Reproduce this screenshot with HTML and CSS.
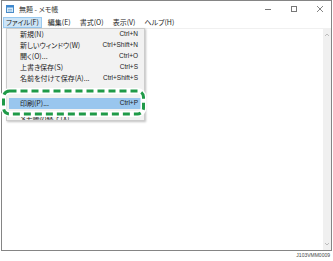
FILE: index.html
```html
<!DOCTYPE html>
<html lang="ja">
<head>
<meta charset="utf-8">
<link rel="stylesheet" href="styles.css">
</head>
<body>
<div class="screen">
  <div class="window">
    <div class="titlebar">
      <svg class="app-icon" width="8" height="8" viewBox="0 0 8 8">
        <rect x="0.5" y="0.5" width="7" height="7" fill="#d8ecfa" stroke="#4a8cc9"/>
        <rect x="0.5" y="0.5" width="7" height="2" fill="#3b86d0"/>
        <path d="M2 4.5h4M2 6h4" stroke="#7aa6cf" stroke-width="0.7"/>
      </svg>
      <span class="title">無題 - メモ帳</span>
      <div class="controls">
        <svg class="ctl" width="10" height="10" viewBox="0 0 10 10"><path d="M2 5.5h6" stroke="#777" stroke-width="1"/></svg>
        <svg class="ctl" width="10" height="10" viewBox="0 0 10 10"><rect x="2.5" y="2.5" width="5" height="5" fill="none" stroke="#777" stroke-width="1"/></svg>
        <svg class="ctl" width="10" height="10" viewBox="0 0 10 10"><path d="M2 2l6 6M8 2l-6 6" stroke="#777" stroke-width="0.9"/></svg>
      </div>
    </div>
    <div class="menubar">
      <span class="menu active">ファイル(F)</span>
      <span class="menu">編集(E)</span>
      <span class="menu">書式(O)</span>
      <span class="menu">表示(V)</span>
      <span class="menu">ヘルプ(H)</span>
    </div>
    <div class="editor">
      <div class="text"></div>
      <div class="scrollbar">
        <svg width="8" height="8" viewBox="0 0 8 8"><path d="M2 5l2-2 2 2" fill="none" stroke="#b0b0b0" stroke-width="0.8"/></svg>
        <svg width="8" height="8" viewBox="0 0 8 8"><path d="M2 3l2 2 2-2" fill="none" stroke="#b0b0b0" stroke-width="0.8"/></svg>
      </div>
    </div>
  </div>

  <div class="dropdown">
    <div class="item"><span>新規(N)</span><span class="key">Ctrl+N</span></div>
    <div class="item"><span>新しいウィンドウ(W)</span><span class="key">Ctrl+Shift+N</span></div>
    <div class="item"><span>開く(O)...</span><span class="key">Ctrl+O</span></div>
    <div class="item"><span>上書き保存(S)</span><span class="key">Ctrl+S</span></div>
    <div class="item"><span>名前を付けて保存(A)...</span><span class="key">Ctrl+Shift+S</span></div>
    <div class="sep"></div>
    <div class="item selected"><span>印刷(P)...</span><span class="key">Ctrl+P</span></div>
    <div class="item last"><span>メモ帳の終了(X)</span><span class="key"></span></div>
  </div>

  <svg class="focus" width="147" height="31" viewBox="0 0 147 31">
    <rect x="3.5" y="4" width="140" height="23" rx="6" fill="none" stroke="#ffffff" stroke-width="6"/>
    <rect x="3.5" y="4" width="140" height="23" rx="6" fill="none" stroke="#1f9a48" stroke-width="3" stroke-dasharray="7 4"/>
  </svg>

  <div class="caption">J103VMM0009</div>
</div>
</body>
</html>
```

FILE: styles.css
```css
* { box-sizing: border-box; }
html, body { margin: 0; padding: 0; background: #fff; }
body {
  font-family: "Noto Sans CJK JP", "Noto Sans", sans-serif;
  color: #222;
  font-feature-settings: "palt";
}
.screen {
  position: relative;
  width: 333px;
  height: 261px;
  overflow: hidden;
}
.window {
  margin-left: 1px;
  width: 331px;
  height: 251px;
  border: 1px solid #858585;
  display: flex;
  flex-direction: column;
  background: #fff;
}
.titlebar {
  height: 16px;
  display: flex;
  align-items: center;
  padding-left: 4px;
}
.app-icon { flex: none; }
.title {
  margin-left: 5px;
  font-size: 7px;
  color: #333;
  line-height: 1;
}
.controls {
  margin-left: auto;
  display: flex;
  gap: 16px;
  padding-right: 6px;
}
.ctl { display: block; }
.menubar {
  height: 10px;
  display: flex;
  align-items: center;
  padding-left: 2px;
  border-bottom: 1px solid #f0f0f0;
  box-sizing: content-box;
  padding-bottom: 1px;
}
.menu {
  font-size: 7px;
  line-height: 9px;
  padding: 0 2px;
  margin-right: 5px;
  color: #222;
}
.menu.active {
  background: #cce4f7;
  outline: 1px solid #99c9ef;
}
.editor {
  flex: 1;
  display: flex;
}
.text { flex: 1; }
.scrollbar {
  width: 8px;
  background: #f0f0f0;
  display: flex;
  flex-direction: column;
  justify-content: space-between;
  padding: 2px 0;
}
.scrollbar svg { display: block; }
.dropdown {
  position: absolute;
  left: 6px;
  top: 28px;
  width: 139px;
  height: 93px;
  background: #f2f2f2;
  border: 1px solid #cccccc;
  box-shadow: 1px 1px 2px rgba(0,0,0,0.25);
  padding: 0 2px;
  overflow: hidden;
}
.item {
  height: 11px;
  display: flex;
  align-items: center;
  justify-content: space-between;
  padding: 0 4px 0 11px;
  font-size: 7px;
  line-height: 1;
  color: #222;
}
.item.last {
  align-items: flex-end;
  padding-bottom: 0;
  height: 13px;
}
.key {
  font-family: "Liberation Sans", sans-serif;
  font-size: 6.5px;
}
.item.selected { background: #99c6ee; }
.sep {
  height: 14px;
  display: flex;
  align-items: center;
}
.sep::before {
  content: "";
  display: block;
  flex: 1;
  height: 1px;
  margin: 0 2px 0 24px;
  background: #d7d7d7;
}
.focus {
  position: absolute;
  left: 0;
  top: 87px;
}
.caption {
  position: absolute;
  right: 3px;
  top: 252px;
  font-family: "Liberation Sans", sans-serif;
  font-size: 5px;
  color: #444;
}
```
